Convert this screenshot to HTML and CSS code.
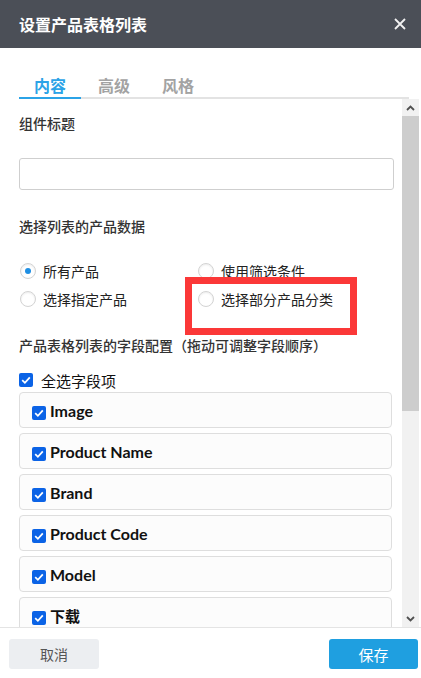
FILE: index.html
```html
<!DOCTYPE html>
<html lang="zh">
<head>
<meta charset="utf-8">
<title>设置产品表格列表</title>
<link rel="stylesheet" href="styles.css">
</head>
<body>
<div class="dialog">
  <header class="head">
    <h1 class="title">设置产品表格列表</h1>
    <svg class="close" width="12" height="12" viewBox="0 0 12 12"><path d="M1 1L11 11M11 1L1 11" stroke="#f2f2f2" stroke-width="1.8" fill="none"/></svg>
  </header>
  <nav class="tabs">
    <span class="tab active">内容</span>
    <span class="tab">高级</span>
    <span class="tab">风格</span>
  </nav>
  <div class="scroller">
    <div class="content">
      <div class="label l1">组件标题</div>
      <div class="input"></div>
      <div class="label l2">选择列表的产品数据</div>
      <div class="radios">
        <div class="radio"><span class="dot on"></span>所有产品</div>
        <div class="radio"><span class="dot"></span>使用筛选条件</div>
        <div class="radio"><span class="dot"></span>选择指定产品</div>
        <div class="radio"><span class="dot"></span>选择部分产品分类</div>
      </div>
      <div class="label l3">产品表格列表的字段配置（拖动可调整字段顺序）</div>
      <div class="all"><span class="cb"><svg width="14" height="14" viewBox="0 0 14 14"><path d="M3.2 7.2L5.9 9.8L10.8 4.4" stroke="#fff" stroke-width="1.8" fill="none"/></svg></span>全选字段项</div>
      <div class="fields">
        <div class="field"><span class="cb"><svg width="14" height="14" viewBox="0 0 14 14"><path d="M3.2 7.2L5.9 9.8L10.8 4.4" stroke="#fff" stroke-width="1.8" fill="none"/></svg></span>Image</div>
        <div class="field"><span class="cb"><svg width="14" height="14" viewBox="0 0 14 14"><path d="M3.2 7.2L5.9 9.8L10.8 4.4" stroke="#fff" stroke-width="1.8" fill="none"/></svg></span>Product Name</div>
        <div class="field"><span class="cb"><svg width="14" height="14" viewBox="0 0 14 14"><path d="M3.2 7.2L5.9 9.8L10.8 4.4" stroke="#fff" stroke-width="1.8" fill="none"/></svg></span>Brand</div>
        <div class="field"><span class="cb"><svg width="14" height="14" viewBox="0 0 14 14"><path d="M3.2 7.2L5.9 9.8L10.8 4.4" stroke="#fff" stroke-width="1.8" fill="none"/></svg></span>Product Code</div>
        <div class="field"><span class="cb"><svg width="14" height="14" viewBox="0 0 14 14"><path d="M3.2 7.2L5.9 9.8L10.8 4.4" stroke="#fff" stroke-width="1.8" fill="none"/></svg></span>Model</div>
        <div class="field cjk"><span class="cb"><svg width="14" height="14" viewBox="0 0 14 14"><path d="M3.2 7.2L5.9 9.8L10.8 4.4" stroke="#fff" stroke-width="1.8" fill="none"/></svg></span>下载</div>
      </div>
    </div>
    <div class="sbar">
      <div class="sbtn"><svg width="9" height="6" viewBox="0 0 9 6"><path d="M1 5L4.5 1.5L8 5" stroke="#505050" stroke-width="1.8" fill="none"/></svg></div>
      <div class="thumb"></div>
      <div class="track"></div>
      <div class="sbtn"><svg width="9" height="6" viewBox="0 0 9 6"><path d="M1 1L4.5 4.5L8 1" stroke="#505050" stroke-width="1.8" fill="none"/></svg></div>
    </div>
  </div>
  <footer class="foot">
    <button class="btn cancel">取消</button>
    <button class="btn save">保存</button>
  </footer>
  <div class="mark"></div>
</div>
</body>
</html>
```

FILE: styles.css
```css
* { box-sizing: border-box; }
html, body { margin: 0; padding: 0; background: #fff; }
body { font-family: "Noto Sans CJK SC", "Noto Sans", sans-serif; color: #333; }
.dialog { position: relative; width: 421px; height: 678px; display: flex; flex-direction: column; }
.head { height: 48px; background: #4b4f57; display: flex; align-items: center; justify-content: space-between; padding: 0 15px 0 19px; }
.title { margin: 0; font-size: 16px; font-weight: 700; color: #fff; line-height: 20px; }
.close { display: block; }
.tabs { display: flex; margin: 0 12px 0 19px; padding-top: 26px; border-bottom: 2px solid #e3e3e3; }
.tab { width: 62px; margin-right: 2px; text-align: center; font-size: 16px; font-weight: 700; line-height: 22px; padding-bottom: 1px; color: #a3a3a3; border-bottom: 2px solid transparent; margin-bottom: -2px; }
.tab.active { color: #2ba3e7; border-bottom-color: #2ba3e7; }
.scroller { height: 528px; display: flex; margin-right: 2px; }
.content { flex: 1; overflow: hidden; padding-left: 19px; }
.label { font-size: 14px; line-height: 20px; color: #333; font-weight: 500; }
.l1 { margin-top: 14px; }
.l2 { margin-top: 26px; }
.l3 { margin-top: 22px; }
.input { margin-top: 25px; width: 375px; height: 32px; border: 1px solid #cfcfcf; border-radius: 3px; }
.radios { margin-top: 21px; display: grid; grid-template-columns: 178px 1fr; }
.radio { height: 28px; display: flex; align-items: center; font-size: 14px; color: #222; padding-left: 1px; }
.dot { width: 16px; height: 16px; border-radius: 50%; border: 1px solid #d3d3d3; box-shadow: inset 0 1px 2px rgba(0,0,0,0.08); margin-right: 7px; display: flex; align-items: center; justify-content: center; }
.dot.on::after { content: ""; width: 6px; height: 6px; border-radius: 50%; background: #1f8fe3; }
.all { margin-top: 15px; height: 20px; display: flex; align-items: center; font-size: 15px; color: #111; }
.all .cb { margin-right: 8px; }
.cb { width: 14px; height: 14px; border-radius: 2px; background: #0b63e6; display: inline-flex; flex: none; }
.cb svg { display: block; }
.fields { margin-top: 2px; display: flex; flex-direction: column; gap: 5px; width: 373px; }
.field { height: 36px; border: 1px solid #dedede; border-radius: 4px; background: #fcfcfc; display: flex; align-items: center; padding-left: 12px; padding-top: 1px; font-family: "Lato", "Noto Sans CJK SC", sans-serif; font-weight: 700; font-size: 16px; color: #111; }
.field.cjk { font-size: 15px; }
.field .cb { margin-right: 4px; margin-top: 5px; }
.sbar { width: 17px; display: flex; flex-direction: column; background: #f1f1f1; }
.sbtn { height: 17px; display: flex; align-items: center; justify-content: center; }
.thumb { height: 295px; background: #cdcdcd; }
.track { flex: 1; }
.foot { border-top: 1px solid #e4e4e4; padding: 11px 3px 0 9px; display: flex; justify-content: space-between; }
.btn { height: 30px; width: 90px; border: 0; border-radius: 3px; font-family: "Noto Sans CJK SC", sans-serif; font-size: 14px; padding: 0; }
.cancel { background: #eceef1; color: #555; }
.save { background: #1f9fe0; color: #fff; font-size: 15px; width: 89px; }
.mark { position: absolute; left: 185px; top: 277px; width: 172px; height: 58px; border: 7px solid #fb3838; }
```
